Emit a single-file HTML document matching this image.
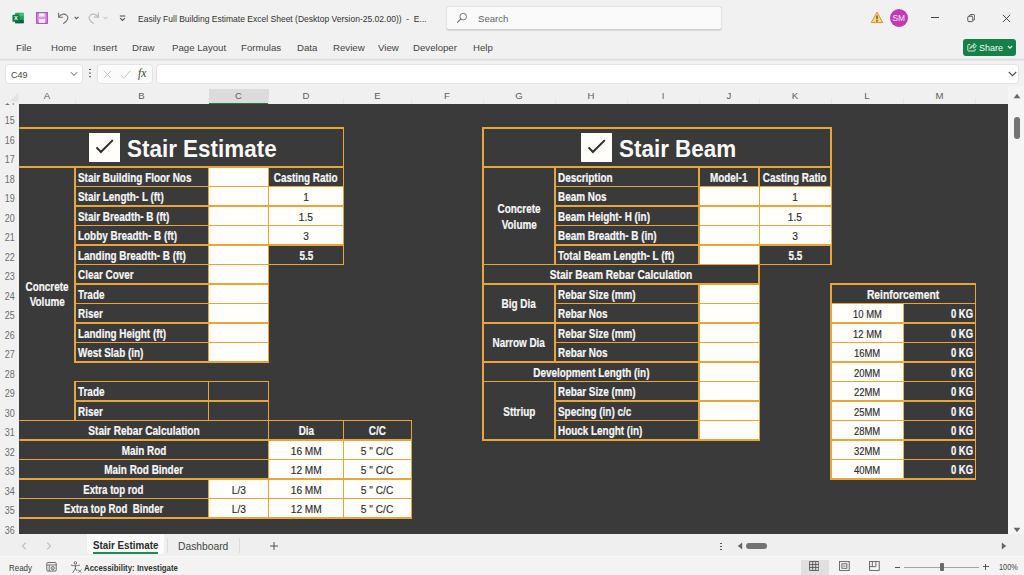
<!DOCTYPE html>
<html lang="en">
<head>
<meta charset="utf-8">
<title>Easily Full Building Estimate Excel Sheet</title>
<style>
html,body{margin:0;padding:0}
body{width:1024px;height:575px;overflow:hidden;background:#f1f1f1;font-family:"Liberation Sans",sans-serif;position:relative;color:#333}
#app{position:absolute;left:0;top:0;width:1024px;height:575px;overflow:hidden;background:#f1f1f1}
.abs{position:absolute}
.ui{position:absolute;white-space:nowrap;color:#3b3b3b;font-size:10.4px;line-height:14px;height:14px}
.ui span,.t span,.ttl span{display:inline-block;white-space:nowrap}
#sheet{position:absolute;left:19.300px;top:104px;width:988.700px;height:430.400px;background:#3a3a3a}
#grid{position:absolute;left:0;top:0;width:1024px;height:534px;overflow:hidden;clip-path:inset(104px 16px 0 19.400px)}
.ln{position:absolute}
.t{position:absolute;display:flex;height:20px;line-height:20px;white-space:nowrap;font-size:12px}
.t.b{font-weight:bold;color:#f7f7f7;-webkit-text-stroke:0.2px #f7f7f7}
.t.n{color:#2c2c2c;font-size:11.300px;-webkit-text-stroke:0.150px #2c2c2c}
.ttl{position:absolute;white-space:nowrap;font-weight:bold;font-size:23.700px;line-height:26px;color:#fafafa}
.ch{position:absolute;top:89.300px;width:40px;text-align:center;font-size:9.600px;line-height:14px;color:#5e5e5e}
.rh{position:absolute;left:0;width:19.500px;text-align:center;font-size:10.200px;line-height:16px;height:16px;color:#6c6c6c;transform:scaleX(0.88)}
</style>
</head>
<body>
<div id="app">

<!-- ===== title bar ===== -->
<div id="titlebar">
<!-- excel logo -->
<svg class="abs" style="left:12px;top:11.6px" width="12.2" height="12.2" viewBox="0 0 14 14">
<rect x="3.5" y="1" width="10" height="12" rx="1" fill="#21a366"/>
<rect x="8.5" y="1" width="5" height="4" fill="#33c481"/>
<rect x="8.5" y="5" width="5" height="4" fill="#21a366"/>
<rect x="3.5" y="5" width="5" height="4" fill="#107c41"/>
<rect x="3.5" y="9" width="10" height="4" rx="1" fill="#185c37"/>
<rect x="0.5" y="3.2" width="8" height="8" rx="1" fill="#107c41"/>
<text x="4.5" y="9.6" font-family="Liberation Sans, sans-serif" font-size="6.6" font-weight="bold" fill="#fff" text-anchor="middle">X</text>
</svg>
<!-- save -->
<svg class="abs" style="left:36px;top:12px" width="12" height="12" viewBox="0 0 12 12">
<rect x="0.700" y="0.700" width="10.600" height="10.600" fill="#dc94e4" stroke="#a84bb8" stroke-width="1.200"/>
<rect x="3" y="1.300" width="5.600" height="3.300" fill="#f7eaf9"/>
<rect x="3" y="7" width="6" height="3.800" fill="#f7eaf9"/>
</svg>
<!-- undo -->
<svg class="abs" style="left:57px;top:11px" width="13" height="14" viewBox="0 0 13 14">
<path d="M1.600 1.800v4.400h4.400" fill="none" stroke="#727272" stroke-width="1.050"/>
<path d="M1.800 6.100C3.600 3.200 7.200 2.200 9.600 4.100c2.400 2 1.600 5.600-3.400 8.600" fill="none" stroke="#727272" stroke-width="1.050"/>
</svg>
<svg class="abs" style="left:74px;top:15.800px" width="5" height="4" viewBox="0 0 5 4"><path d="M0.600 0.800l1.900 1.900L4.400 0.800" fill="none" stroke="#555" stroke-width="1.100"/></svg>
<!-- redo -->
<svg class="abs" style="left:87px;top:11px" width="13" height="14" viewBox="0 0 13 14">
<path d="M11.4 1.6v4.6H6.8" fill="none" stroke="#bdbdbd" stroke-width="1.2"/>
<path d="M11.2 6.1C9.4 3.2 5.8 2.2 3.4 4.1c-2.4 2-1.6 5.6 3.4 8.6" fill="none" stroke="#bdbdbd" stroke-width="1.2"/>
</svg>
<svg class="abs" style="left:103px;top:15.800px" width="5" height="4" viewBox="0 0 5 4"><path d="M0.600 0.800l1.900 1.900L4.400 0.800" fill="none" stroke="#cacaca" stroke-width="1.100"/></svg>
<!-- customize QAT -->
<svg class="abs" style="left:119px;top:14.600px" width="7" height="7" viewBox="0 0 7 7"><path d="M0.800 1h5.400" stroke="#555" stroke-width="1.100"/><path d="M1.200 3.200l2.300 2.300 2.300-2.300" fill="none" stroke="#555" stroke-width="1.200"/></svg>
<!-- title -->
<div class="ui" style="left:137.5px;top:11.700px;font-size:9.8px;color:#333"><span style="transform:scaleX(0.869);transform-origin:left center">Easily Full Building Estimate Excel Sheet (Desktop Version-25.02.00))&nbsp; -&nbsp; E...</span></div>
<!-- search -->
<div class="abs" style="left:446px;top:6px;width:276px;height:23.5px;box-sizing:border-box;background:#fafafa;border:1px solid #e3e3e3;border-bottom-color:#cfcfcf;border-radius:3.5px;box-shadow:0 0.6px 1px rgba(0,0,0,.10)"></div>
<svg class="abs" style="left:456px;top:12px" width="12" height="12" viewBox="0 0 12 12"><circle cx="7.2" cy="4.6" r="3.300" fill="none" stroke="#777" stroke-width="1"/><path d="M4.800 7L1.400 10.400" stroke="#777" stroke-width="1.100" stroke-linecap="round"/></svg>
<div class="ui" style="left:477.5px;top:11.5px;color:#666;font-size:9.8px"><span style="transform:scaleX(0.98);transform-origin:left center">Search</span></div>
<!-- warning -->
<svg class="abs" style="left:870px;top:11px" width="14" height="13" viewBox="0 0 14 13"><path d="M7 1.2L12.8 11.6H1.2z" fill="#fbd48a" stroke="#d9962b" stroke-width="1" stroke-linejoin="round"/><path d="M7 4.6v3.6" stroke="#5a4310" stroke-width="1.3"/><circle cx="7" cy="9.9" r="0.8" fill="#5a4310"/></svg>
<!-- avatar -->
<div class="abs" style="left:889.6px;top:8.6px;width:18.4px;height:18.4px;border-radius:50%;background:#c239b3"></div>
<div class="ui" style="left:889.6px;top:10.8px;width:18.4px;text-align:center;color:#fbe9f9;font-size:8.4px"><span>SM</span></div>
<!-- window controls -->
<div class="abs" style="left:931.200px;top:16.700px;width:7.600px;height:1px;background:#444"></div>
<svg class="abs" style="left:966.600px;top:14.400px" width="8.600" height="8.600" viewBox="0 0 10 10"><rect x="0.9" y="2.6" width="5.8" height="6.2" rx="1.3" fill="none" stroke="#333" stroke-width="1"/><path d="M3 2.4V2c0-.8.5-1.3 1.300-1.300h3.400c.8 0 1.300.5 1.300 1.300v3.700c0 .8-.5 1.300-1.300 1.300H7" fill="none" stroke="#333" stroke-width="1"/></svg>
<svg class="abs" style="left:1002.400px;top:13.600px" width="9" height="9" viewBox="0 0 10 10"><path d="M1 1l8 8M9 1l-8 8" stroke="#333" stroke-width="1"/></svg>

</div>

<!-- ===== ribbon tabs ===== -->
<div id="tabs">
<div class="ui" style="left:16.3px;top:40.600px;font-size:9.700px;color:#444"><span style="transform:scaleX(0.995);transform-origin:left center">File</span></div>
<div class="ui" style="left:51px;top:40.600px;font-size:9.700px;color:#444"><span style="transform:scaleX(0.995);transform-origin:left center">Home</span></div>
<div class="ui" style="left:93px;top:40.600px;font-size:9.700px;color:#444"><span style="transform:scaleX(0.995);transform-origin:left center">Insert</span></div>
<div class="ui" style="left:132.3px;top:40.600px;font-size:9.700px;color:#444"><span style="transform:scaleX(0.995);transform-origin:left center">Draw</span></div>
<div class="ui" style="left:171.5px;top:40.600px;font-size:9.700px;color:#444"><span style="transform:scaleX(0.995);transform-origin:left center">Page Layout</span></div>
<div class="ui" style="left:241.3px;top:40.600px;font-size:9.700px;color:#444"><span style="transform:scaleX(0.995);transform-origin:left center">Formulas</span></div>
<div class="ui" style="left:297.3px;top:40.600px;font-size:9.700px;color:#444"><span style="transform:scaleX(0.995);transform-origin:left center">Data</span></div>
<div class="ui" style="left:333.3px;top:40.600px;font-size:9.700px;color:#444"><span style="transform:scaleX(0.995);transform-origin:left center">Review</span></div>
<div class="ui" style="left:378px;top:40.600px;font-size:9.700px;color:#444"><span style="transform:scaleX(0.995);transform-origin:left center">View</span></div>
<div class="ui" style="left:413.3px;top:40.600px;font-size:9.700px;color:#444"><span style="transform:scaleX(0.995);transform-origin:left center">Developer</span></div>
<div class="ui" style="left:473.3px;top:40.600px;font-size:9.700px;color:#444"><span style="transform:scaleX(0.995);transform-origin:left center">Help</span></div>
<!-- share button -->
<div class="abs" style="left:962.5px;top:38.6px;width:53px;height:17.6px;border-radius:3px;background:#15804a"></div>
<svg class="abs" style="left:966.5px;top:42px" width="10" height="10" viewBox="0 0 10 10"><path d="M3.4 2.6H1.600c-.5 0-.8.300-.8.800v4.800c0 .5.300.8.800.8h5.800c.5 0 .8-.3.800-.8V7" fill="none" stroke="#e9f5ee" stroke-width="0.9"/><path d="M3 6.600c.4-2 1.800-3.200 4-3.300V1.400l2.400 2.500L7 6.400V4.700C5.400 4.700 4 5.300 3 6.600z" fill="none" stroke="#e9f5ee" stroke-width="0.9" stroke-linejoin="round"/></svg>
<div class="ui" style="left:978.600px;top:40.600px;color:#f4fbf6;font-size:9.800px"><span style="transform:scaleX(0.92);transform-origin:left center">Share</span></div>
<svg class="abs" style="left:1007px;top:45.4px" width="6" height="5" viewBox="0 0 6 5"><path d="M0.900 1l2.100 2.100L5.100 1" fill="none" stroke="#e9f5ee" stroke-width="1.1"/></svg>
<!-- separator shadow -->
<div class="abs" style="left:0;top:57.800px;width:1024px;height:3px;background:linear-gradient(#efefef,#dcdcdc 50%,#ededed)"></div>

</div>

<!-- ===== formula bar ===== -->
<div id="fbar">
<div class="abs" style="left:6.300px;top:65px;width:75.500px;height:17.800px;background:#fff;border-radius:3px;box-shadow:0 0 0 0.800px #e0e0e0"></div>
<div class="ui" style="left:11.300px;top:67.700px;font-size:9.800px;color:#444"><span style="transform:scaleX(0.92);transform-origin:left center">C49</span></div>
<svg class="abs" style="left:69.500px;top:71px" width="8" height="6" viewBox="0 0 8 6"><path d="M0.800 1.200l3.200 3.200 3.200-3.200" fill="none" stroke="#555" stroke-width="0.950"/></svg>
<div class="abs" style="left:89.4px;top:68.6px;width:1.5px;height:1.500px;background:#555;box-shadow:0 3.600px 0 #555,0 7.200px 0 #555"></div>
<div class="abs" style="left:98px;top:65px;width:54px;height:17.800px;background:#fbfbfb;border-radius:3px;box-shadow:0 0 0 0.800px #e0e0e0"></div>
<svg class="abs" style="left:103px;top:69.500px" width="9" height="9" viewBox="0 0 9 9"><path d="M0.800.8l7.400 7.400M8.200.8L.8 8.200" stroke="#c6c6c6" stroke-width="1"/></svg>
<svg class="abs" style="left:119.500px;top:69.500px" width="11" height="9" viewBox="0 0 11 9"><path d="M0.800 5l3.200 3.200L10.200.8" fill="none" stroke="#c6c6c6" stroke-width="1"/></svg>
<div class="ui" style="left:138px;top:66.2px;font-family:'Liberation Serif',serif;font-style:italic;font-size:11.5px;color:#444"><span><b style="font-weight:normal">f</b>x</span></div>
<div class="abs" style="left:156.800px;top:65px;width:861.400px;height:17.800px;background:#fff;border-radius:3px;box-shadow:0 0 0 0.800px #e0e0e0"></div>
<svg class="abs" style="left:1007.500px;top:70.5px" width="9" height="6" viewBox="0 0 9 6"><path d="M0.800 1l3.700 3.700L8.200 1" fill="none" stroke="#555" stroke-width="1.1"/></svg>

</div>

<!-- ===== column headers ===== -->
<div id="colhdr">
<div class="abs" style="left:0;top:86px;width:1024px;height:18px;background:#f0f0f0"></div>
<div class="abs" style="left:208.5px;top:88.500px;width:60px;height:15.500px;background:#dcdcdc;border-bottom:1.6px solid #1f7a48;box-sizing:border-box"></div>
<svg class="abs" style="left:7px;top:90px" width="12" height="12" viewBox="0 0 12 12"><path d="M11.500 2.500v9H2.500z" fill="#e3e3e3"/></svg>
<div class="ch" style="left:27px">A</div>
<div class="ch" style="left:121.5px">B</div>
<div class="ch" style="left:218.5px">C</div>
<div class="ch" style="left:286px">D</div>
<div class="ch" style="left:357.5px">E</div>
<div class="ch" style="left:427px">F</div>
<div class="ch" style="left:499px">G</div>
<div class="ch" style="left:571px">H</div>
<div class="ch" style="left:643px">I</div>
<div class="ch" style="left:709px">J</div>
<div class="ch" style="left:775px">K</div>
<div class="ch" style="left:847px">L</div>
<div class="ch" style="left:919.5px">M</div>
<div style="position:absolute;left:74.5px;top:98px;width:1px;height:6px;background:#e6e6e6"></div>
<div style="position:absolute;left:208.0px;top:98px;width:1px;height:6px;background:#e6e6e6"></div>
<div style="position:absolute;left:268.0px;top:98px;width:1px;height:6px;background:#e6e6e6"></div>
<div style="position:absolute;left:343.0px;top:98px;width:1px;height:6px;background:#e6e6e6"></div>
<div style="position:absolute;left:411.0px;top:98px;width:1px;height:6px;background:#e6e6e6"></div>
<div style="position:absolute;left:482.5px;top:98px;width:1px;height:6px;background:#e6e6e6"></div>
<div style="position:absolute;left:554.5px;top:98px;width:1px;height:6px;background:#e6e6e6"></div>
<div style="position:absolute;left:626.5px;top:98px;width:1px;height:6px;background:#e6e6e6"></div>
<div style="position:absolute;left:698.5px;top:98px;width:1px;height:6px;background:#e6e6e6"></div>
<div style="position:absolute;left:758.5px;top:98px;width:1px;height:6px;background:#e6e6e6"></div>
<div style="position:absolute;left:830.5px;top:98px;width:1px;height:6px;background:#e6e6e6"></div>
<div style="position:absolute;left:903.0px;top:98px;width:1px;height:6px;background:#e6e6e6"></div>
<div style="position:absolute;left:975.0px;top:98px;width:1px;height:6px;background:#e6e6e6"></div>
</div>

<!-- ===== row headers ===== -->
<div id="rowhdr" class="abs" style="left:0;top:103px;width:19px;height:431px;overflow:hidden;background:#f1f1f1">
<div class="abs" style="left:0;top:-103px;width:19px;height:575px">
<div class="rh" style="top:93.55px">14</div>
<div class="rh" style="top:113.05px">15</div>
<div class="rh" style="top:132.55px">16</div>
<div class="rh" style="top:152.05px">17</div>
<div class="rh" style="top:171.55px">18</div>
<div class="rh" style="top:191.05px">19</div>
<div class="rh" style="top:210.55px">20</div>
<div class="rh" style="top:230.05px">21</div>
<div class="rh" style="top:249.55px">22</div>
<div class="rh" style="top:269.05px">23</div>
<div class="rh" style="top:288.55px">24</div>
<div class="rh" style="top:308.05px">25</div>
<div class="rh" style="top:327.55px">26</div>
<div class="rh" style="top:347.05px">27</div>
<div class="rh" style="top:366.55px">28</div>
<div class="rh" style="top:386.05px">29</div>
<div class="rh" style="top:405.55px">30</div>
<div class="rh" style="top:425.05px">31</div>
<div class="rh" style="top:444.55px">32</div>
<div class="rh" style="top:464.05px">33</div>
<div class="rh" style="top:483.55px">34</div>
<div class="rh" style="top:503.05px">35</div>
<div class="rh" style="top:522.55px">36</div>
</div>
</div>

<!-- ===== sheet ===== -->
<div id="sheet"></div>
<div id="grid">
<div class="ln" style="left:18.15px;top:127.15px;width:326.20px;height:1.7px;background:#e8a63a"></div>
<div class="ln" style="left:18.15px;top:166.15px;width:326.20px;height:1.7px;background:#e8a63a"></div>
<div class="ln" style="left:342.65px;top:127.15px;width:1.7px;height:40.70px;background:#e8a63a"></div>
<div class="ln" style="left:18.15px;top:166.15px;width:326.20px;height:1.7px;background:#e8a63a"></div>
<div class="ln" style="left:74.15px;top:166.15px;width:135.20px;height:1.7px;background:#e8a63a"></div>
<div class="ln" style="left:74.15px;top:185.65px;width:135.20px;height:1.7px;background:#e8a63a"></div>
<div class="ln" style="left:74.15px;top:166.15px;width:1.7px;height:21.20px;background:#e8a63a"></div>
<div class="ln" style="left:207.65px;top:166.15px;width:1.7px;height:21.20px;background:#e8a63a"></div>
<div class="ln" style="left:207.65px;top:166.15px;width:61.70px;height:1.7px;background:#e8a63a"></div>
<div class="ln" style="left:207.65px;top:185.65px;width:61.70px;height:1.7px;background:#e8a63a"></div>
<div class="ln" style="left:207.65px;top:166.15px;width:1.7px;height:21.20px;background:#e8a63a"></div>
<div class="ln" style="left:267.65px;top:166.15px;width:1.7px;height:21.20px;background:#e8a63a"></div>
<div class="ln" style="left:74.15px;top:185.65px;width:135.20px;height:1.7px;background:#e8a63a"></div>
<div class="ln" style="left:74.15px;top:205.15px;width:135.20px;height:1.7px;background:#e8a63a"></div>
<div class="ln" style="left:74.15px;top:185.65px;width:1.7px;height:21.20px;background:#e8a63a"></div>
<div class="ln" style="left:207.65px;top:185.65px;width:1.7px;height:21.20px;background:#e8a63a"></div>
<div class="ln" style="left:207.65px;top:185.65px;width:61.70px;height:1.7px;background:#e8a63a"></div>
<div class="ln" style="left:207.65px;top:205.15px;width:61.70px;height:1.7px;background:#e8a63a"></div>
<div class="ln" style="left:207.65px;top:185.65px;width:1.7px;height:21.20px;background:#e8a63a"></div>
<div class="ln" style="left:267.65px;top:185.65px;width:1.7px;height:21.20px;background:#e8a63a"></div>
<div class="ln" style="left:74.15px;top:205.15px;width:135.20px;height:1.7px;background:#e8a63a"></div>
<div class="ln" style="left:74.15px;top:224.65px;width:135.20px;height:1.7px;background:#e8a63a"></div>
<div class="ln" style="left:74.15px;top:205.15px;width:1.7px;height:21.20px;background:#e8a63a"></div>
<div class="ln" style="left:207.65px;top:205.15px;width:1.7px;height:21.20px;background:#e8a63a"></div>
<div class="ln" style="left:207.65px;top:205.15px;width:61.70px;height:1.7px;background:#e8a63a"></div>
<div class="ln" style="left:207.65px;top:224.65px;width:61.70px;height:1.7px;background:#e8a63a"></div>
<div class="ln" style="left:207.65px;top:205.15px;width:1.7px;height:21.20px;background:#e8a63a"></div>
<div class="ln" style="left:267.65px;top:205.15px;width:1.7px;height:21.20px;background:#e8a63a"></div>
<div class="ln" style="left:74.15px;top:224.65px;width:135.20px;height:1.7px;background:#e8a63a"></div>
<div class="ln" style="left:74.15px;top:244.15px;width:135.20px;height:1.7px;background:#e8a63a"></div>
<div class="ln" style="left:74.15px;top:224.65px;width:1.7px;height:21.20px;background:#e8a63a"></div>
<div class="ln" style="left:207.65px;top:224.65px;width:1.7px;height:21.20px;background:#e8a63a"></div>
<div class="ln" style="left:207.65px;top:224.65px;width:61.70px;height:1.7px;background:#e8a63a"></div>
<div class="ln" style="left:207.65px;top:244.15px;width:61.70px;height:1.7px;background:#e8a63a"></div>
<div class="ln" style="left:207.65px;top:224.65px;width:1.7px;height:21.20px;background:#e8a63a"></div>
<div class="ln" style="left:267.65px;top:224.65px;width:1.7px;height:21.20px;background:#e8a63a"></div>
<div class="ln" style="left:74.15px;top:244.15px;width:135.20px;height:1.7px;background:#e8a63a"></div>
<div class="ln" style="left:74.15px;top:263.65px;width:135.20px;height:1.7px;background:#e8a63a"></div>
<div class="ln" style="left:74.15px;top:244.15px;width:1.7px;height:21.20px;background:#e8a63a"></div>
<div class="ln" style="left:207.65px;top:244.15px;width:1.7px;height:21.20px;background:#e8a63a"></div>
<div class="ln" style="left:207.65px;top:244.15px;width:61.70px;height:1.7px;background:#e8a63a"></div>
<div class="ln" style="left:207.65px;top:263.65px;width:61.70px;height:1.7px;background:#e8a63a"></div>
<div class="ln" style="left:207.65px;top:244.15px;width:1.7px;height:21.20px;background:#e8a63a"></div>
<div class="ln" style="left:267.65px;top:244.15px;width:1.7px;height:21.20px;background:#e8a63a"></div>
<div class="ln" style="left:74.15px;top:263.65px;width:135.20px;height:1.7px;background:#e8a63a"></div>
<div class="ln" style="left:74.15px;top:283.15px;width:135.20px;height:1.7px;background:#e8a63a"></div>
<div class="ln" style="left:74.15px;top:263.65px;width:1.7px;height:21.20px;background:#e8a63a"></div>
<div class="ln" style="left:207.65px;top:263.65px;width:1.7px;height:21.20px;background:#e8a63a"></div>
<div class="ln" style="left:207.65px;top:263.65px;width:61.70px;height:1.7px;background:#e8a63a"></div>
<div class="ln" style="left:207.65px;top:283.15px;width:61.70px;height:1.7px;background:#e8a63a"></div>
<div class="ln" style="left:207.65px;top:263.65px;width:1.7px;height:21.20px;background:#e8a63a"></div>
<div class="ln" style="left:267.65px;top:263.65px;width:1.7px;height:21.20px;background:#e8a63a"></div>
<div class="ln" style="left:74.15px;top:283.15px;width:135.20px;height:1.7px;background:#e8a63a"></div>
<div class="ln" style="left:74.15px;top:302.65px;width:135.20px;height:1.7px;background:#e8a63a"></div>
<div class="ln" style="left:74.15px;top:283.15px;width:1.7px;height:21.20px;background:#e8a63a"></div>
<div class="ln" style="left:207.65px;top:283.15px;width:1.7px;height:21.20px;background:#e8a63a"></div>
<div class="ln" style="left:207.65px;top:283.15px;width:61.70px;height:1.7px;background:#e8a63a"></div>
<div class="ln" style="left:207.65px;top:302.65px;width:61.70px;height:1.7px;background:#e8a63a"></div>
<div class="ln" style="left:207.65px;top:283.15px;width:1.7px;height:21.20px;background:#e8a63a"></div>
<div class="ln" style="left:267.65px;top:283.15px;width:1.7px;height:21.20px;background:#e8a63a"></div>
<div class="ln" style="left:74.15px;top:302.65px;width:135.20px;height:1.7px;background:#e8a63a"></div>
<div class="ln" style="left:74.15px;top:322.15px;width:135.20px;height:1.7px;background:#e8a63a"></div>
<div class="ln" style="left:74.15px;top:302.65px;width:1.7px;height:21.20px;background:#e8a63a"></div>
<div class="ln" style="left:207.65px;top:302.65px;width:1.7px;height:21.20px;background:#e8a63a"></div>
<div class="ln" style="left:207.65px;top:302.65px;width:61.70px;height:1.7px;background:#e8a63a"></div>
<div class="ln" style="left:207.65px;top:322.15px;width:61.70px;height:1.7px;background:#e8a63a"></div>
<div class="ln" style="left:207.65px;top:302.65px;width:1.7px;height:21.20px;background:#e8a63a"></div>
<div class="ln" style="left:267.65px;top:302.65px;width:1.7px;height:21.20px;background:#e8a63a"></div>
<div class="ln" style="left:74.15px;top:322.15px;width:135.20px;height:1.7px;background:#e8a63a"></div>
<div class="ln" style="left:74.15px;top:341.65px;width:135.20px;height:1.7px;background:#e8a63a"></div>
<div class="ln" style="left:74.15px;top:322.15px;width:1.7px;height:21.20px;background:#e8a63a"></div>
<div class="ln" style="left:207.65px;top:322.15px;width:1.7px;height:21.20px;background:#e8a63a"></div>
<div class="ln" style="left:207.65px;top:322.15px;width:61.70px;height:1.7px;background:#e8a63a"></div>
<div class="ln" style="left:207.65px;top:341.65px;width:61.70px;height:1.7px;background:#e8a63a"></div>
<div class="ln" style="left:207.65px;top:322.15px;width:1.7px;height:21.20px;background:#e8a63a"></div>
<div class="ln" style="left:267.65px;top:322.15px;width:1.7px;height:21.20px;background:#e8a63a"></div>
<div class="ln" style="left:74.15px;top:341.65px;width:135.20px;height:1.7px;background:#e8a63a"></div>
<div class="ln" style="left:74.15px;top:361.15px;width:135.20px;height:1.7px;background:#e8a63a"></div>
<div class="ln" style="left:74.15px;top:341.65px;width:1.7px;height:21.20px;background:#e8a63a"></div>
<div class="ln" style="left:207.65px;top:341.65px;width:1.7px;height:21.20px;background:#e8a63a"></div>
<div class="ln" style="left:207.65px;top:341.65px;width:61.70px;height:1.7px;background:#e8a63a"></div>
<div class="ln" style="left:207.65px;top:361.15px;width:61.70px;height:1.7px;background:#e8a63a"></div>
<div class="ln" style="left:207.65px;top:341.65px;width:1.7px;height:21.20px;background:#e8a63a"></div>
<div class="ln" style="left:267.65px;top:341.65px;width:1.7px;height:21.20px;background:#e8a63a"></div>
<div class="ln" style="left:267.65px;top:166.15px;width:76.70px;height:1.7px;background:#e8a63a"></div>
<div class="ln" style="left:267.65px;top:185.65px;width:76.70px;height:1.7px;background:#e8a63a"></div>
<div class="ln" style="left:267.65px;top:166.15px;width:1.7px;height:21.20px;background:#e8a63a"></div>
<div class="ln" style="left:342.65px;top:166.15px;width:1.7px;height:21.20px;background:#e8a63a"></div>
<div class="ln" style="left:267.65px;top:185.65px;width:76.70px;height:1.7px;background:#e8a63a"></div>
<div class="ln" style="left:267.65px;top:205.15px;width:76.70px;height:1.7px;background:#e8a63a"></div>
<div class="ln" style="left:267.65px;top:185.65px;width:1.7px;height:21.20px;background:#e8a63a"></div>
<div class="ln" style="left:342.65px;top:185.65px;width:1.7px;height:21.20px;background:#e8a63a"></div>
<div class="ln" style="left:267.65px;top:205.15px;width:76.70px;height:1.7px;background:#e8a63a"></div>
<div class="ln" style="left:267.65px;top:224.65px;width:76.70px;height:1.7px;background:#e8a63a"></div>
<div class="ln" style="left:267.65px;top:205.15px;width:1.7px;height:21.20px;background:#e8a63a"></div>
<div class="ln" style="left:342.65px;top:205.15px;width:1.7px;height:21.20px;background:#e8a63a"></div>
<div class="ln" style="left:267.65px;top:224.65px;width:76.70px;height:1.7px;background:#e8a63a"></div>
<div class="ln" style="left:267.65px;top:244.15px;width:76.70px;height:1.7px;background:#e8a63a"></div>
<div class="ln" style="left:267.65px;top:224.65px;width:1.7px;height:21.20px;background:#e8a63a"></div>
<div class="ln" style="left:342.65px;top:224.65px;width:1.7px;height:21.20px;background:#e8a63a"></div>
<div class="ln" style="left:267.65px;top:244.15px;width:76.70px;height:1.7px;background:#e8a63a"></div>
<div class="ln" style="left:267.65px;top:263.65px;width:76.70px;height:1.7px;background:#e8a63a"></div>
<div class="ln" style="left:267.65px;top:244.15px;width:1.7px;height:21.20px;background:#e8a63a"></div>
<div class="ln" style="left:342.65px;top:244.15px;width:1.7px;height:21.20px;background:#e8a63a"></div>
<div class="ln" style="left:74.15px;top:380.65px;width:135.20px;height:1.7px;background:#e8a63a"></div>
<div class="ln" style="left:74.15px;top:400.15px;width:135.20px;height:1.7px;background:#e8a63a"></div>
<div class="ln" style="left:74.15px;top:380.65px;width:1.7px;height:21.20px;background:#e8a63a"></div>
<div class="ln" style="left:207.65px;top:380.65px;width:1.7px;height:21.20px;background:#e8a63a"></div>
<div class="ln" style="left:207.65px;top:380.65px;width:61.70px;height:1.7px;background:#e8a63a"></div>
<div class="ln" style="left:207.65px;top:400.15px;width:61.70px;height:1.7px;background:#e8a63a"></div>
<div class="ln" style="left:207.65px;top:380.65px;width:1.7px;height:21.20px;background:#e8a63a"></div>
<div class="ln" style="left:267.65px;top:380.65px;width:1.7px;height:21.20px;background:#e8a63a"></div>
<div class="ln" style="left:74.15px;top:400.15px;width:135.20px;height:1.7px;background:#e8a63a"></div>
<div class="ln" style="left:74.15px;top:419.65px;width:135.20px;height:1.7px;background:#e8a63a"></div>
<div class="ln" style="left:74.15px;top:400.15px;width:1.7px;height:21.20px;background:#e8a63a"></div>
<div class="ln" style="left:207.65px;top:400.15px;width:1.7px;height:21.20px;background:#e8a63a"></div>
<div class="ln" style="left:207.65px;top:400.15px;width:61.70px;height:1.7px;background:#e8a63a"></div>
<div class="ln" style="left:207.65px;top:419.65px;width:61.70px;height:1.7px;background:#e8a63a"></div>
<div class="ln" style="left:207.65px;top:400.15px;width:1.7px;height:21.20px;background:#e8a63a"></div>
<div class="ln" style="left:267.65px;top:400.15px;width:1.7px;height:21.20px;background:#e8a63a"></div>
<div class="ln" style="left:18.15px;top:419.65px;width:394.20px;height:1.7px;background:#e8a63a"></div>
<div class="ln" style="left:267.65px;top:419.65px;width:76.70px;height:1.7px;background:#e8a63a"></div>
<div class="ln" style="left:267.65px;top:439.15px;width:76.70px;height:1.7px;background:#e8a63a"></div>
<div class="ln" style="left:267.65px;top:419.65px;width:1.7px;height:21.20px;background:#e8a63a"></div>
<div class="ln" style="left:342.65px;top:419.65px;width:1.7px;height:21.20px;background:#e8a63a"></div>
<div class="ln" style="left:342.65px;top:419.65px;width:69.70px;height:1.7px;background:#e8a63a"></div>
<div class="ln" style="left:342.65px;top:439.15px;width:69.70px;height:1.7px;background:#e8a63a"></div>
<div class="ln" style="left:342.65px;top:419.65px;width:1.7px;height:21.20px;background:#e8a63a"></div>
<div class="ln" style="left:410.65px;top:419.65px;width:1.7px;height:21.20px;background:#e8a63a"></div>
<div class="ln" style="left:267.65px;top:419.65px;width:1.7px;height:21.20px;background:#e8a63a"></div>
<div class="ln" style="left:18.15px;top:439.15px;width:394.20px;height:1.7px;background:#e8a63a"></div>
<div class="ln" style="left:267.65px;top:439.15px;width:76.70px;height:1.7px;background:#e8a63a"></div>
<div class="ln" style="left:267.65px;top:458.65px;width:76.70px;height:1.7px;background:#e8a63a"></div>
<div class="ln" style="left:267.65px;top:439.15px;width:1.7px;height:21.20px;background:#e8a63a"></div>
<div class="ln" style="left:342.65px;top:439.15px;width:1.7px;height:21.20px;background:#e8a63a"></div>
<div class="ln" style="left:342.65px;top:439.15px;width:69.70px;height:1.7px;background:#e8a63a"></div>
<div class="ln" style="left:342.65px;top:458.65px;width:69.70px;height:1.7px;background:#e8a63a"></div>
<div class="ln" style="left:342.65px;top:439.15px;width:1.7px;height:21.20px;background:#e8a63a"></div>
<div class="ln" style="left:410.65px;top:439.15px;width:1.7px;height:21.20px;background:#e8a63a"></div>
<div class="ln" style="left:267.65px;top:439.15px;width:1.7px;height:21.20px;background:#e8a63a"></div>
<div class="ln" style="left:18.15px;top:458.65px;width:394.20px;height:1.7px;background:#e8a63a"></div>
<div class="ln" style="left:267.65px;top:458.65px;width:76.70px;height:1.7px;background:#e8a63a"></div>
<div class="ln" style="left:267.65px;top:478.15px;width:76.70px;height:1.7px;background:#e8a63a"></div>
<div class="ln" style="left:267.65px;top:458.65px;width:1.7px;height:21.20px;background:#e8a63a"></div>
<div class="ln" style="left:342.65px;top:458.65px;width:1.7px;height:21.20px;background:#e8a63a"></div>
<div class="ln" style="left:342.65px;top:458.65px;width:69.70px;height:1.7px;background:#e8a63a"></div>
<div class="ln" style="left:342.65px;top:478.15px;width:69.70px;height:1.7px;background:#e8a63a"></div>
<div class="ln" style="left:342.65px;top:458.65px;width:1.7px;height:21.20px;background:#e8a63a"></div>
<div class="ln" style="left:410.65px;top:458.65px;width:1.7px;height:21.20px;background:#e8a63a"></div>
<div class="ln" style="left:267.65px;top:458.65px;width:1.7px;height:21.20px;background:#e8a63a"></div>
<div class="ln" style="left:18.15px;top:478.15px;width:394.20px;height:1.7px;background:#e8a63a"></div>
<div class="ln" style="left:207.65px;top:478.15px;width:61.70px;height:1.7px;background:#e8a63a"></div>
<div class="ln" style="left:207.65px;top:497.65px;width:61.70px;height:1.7px;background:#e8a63a"></div>
<div class="ln" style="left:207.65px;top:478.15px;width:1.7px;height:21.20px;background:#e8a63a"></div>
<div class="ln" style="left:267.65px;top:478.15px;width:1.7px;height:21.20px;background:#e8a63a"></div>
<div class="ln" style="left:267.65px;top:478.15px;width:76.70px;height:1.7px;background:#e8a63a"></div>
<div class="ln" style="left:267.65px;top:497.65px;width:76.70px;height:1.7px;background:#e8a63a"></div>
<div class="ln" style="left:267.65px;top:478.15px;width:1.7px;height:21.20px;background:#e8a63a"></div>
<div class="ln" style="left:342.65px;top:478.15px;width:1.7px;height:21.20px;background:#e8a63a"></div>
<div class="ln" style="left:342.65px;top:478.15px;width:69.70px;height:1.7px;background:#e8a63a"></div>
<div class="ln" style="left:342.65px;top:497.65px;width:69.70px;height:1.7px;background:#e8a63a"></div>
<div class="ln" style="left:342.65px;top:478.15px;width:1.7px;height:21.20px;background:#e8a63a"></div>
<div class="ln" style="left:410.65px;top:478.15px;width:1.7px;height:21.20px;background:#e8a63a"></div>
<div class="ln" style="left:18.15px;top:497.65px;width:394.20px;height:1.7px;background:#e8a63a"></div>
<div class="ln" style="left:207.65px;top:497.65px;width:61.70px;height:1.7px;background:#e8a63a"></div>
<div class="ln" style="left:207.65px;top:517.15px;width:61.70px;height:1.7px;background:#e8a63a"></div>
<div class="ln" style="left:207.65px;top:497.65px;width:1.7px;height:21.20px;background:#e8a63a"></div>
<div class="ln" style="left:267.65px;top:497.65px;width:1.7px;height:21.20px;background:#e8a63a"></div>
<div class="ln" style="left:267.65px;top:497.65px;width:76.70px;height:1.7px;background:#e8a63a"></div>
<div class="ln" style="left:267.65px;top:517.15px;width:76.70px;height:1.7px;background:#e8a63a"></div>
<div class="ln" style="left:267.65px;top:497.65px;width:1.7px;height:21.20px;background:#e8a63a"></div>
<div class="ln" style="left:342.65px;top:497.65px;width:1.7px;height:21.20px;background:#e8a63a"></div>
<div class="ln" style="left:342.65px;top:497.65px;width:69.70px;height:1.7px;background:#e8a63a"></div>
<div class="ln" style="left:342.65px;top:517.15px;width:69.70px;height:1.7px;background:#e8a63a"></div>
<div class="ln" style="left:342.65px;top:497.65px;width:1.7px;height:21.20px;background:#e8a63a"></div>
<div class="ln" style="left:410.65px;top:497.65px;width:1.7px;height:21.20px;background:#e8a63a"></div>
<div class="ln" style="left:18.15px;top:517.15px;width:394.20px;height:1.7px;background:#e8a63a"></div>
<div class="ln" style="left:18.15px;top:478.15px;width:394.20px;height:1.7px;background:#e8a63a"></div>
<div class="ln" style="left:482.15px;top:127.15px;width:349.70px;height:1.7px;background:#e8a63a"></div>
<div class="ln" style="left:482.15px;top:166.15px;width:349.70px;height:1.7px;background:#e8a63a"></div>
<div class="ln" style="left:482.15px;top:127.15px;width:1.7px;height:40.70px;background:#e8a63a"></div>
<div class="ln" style="left:830.15px;top:127.15px;width:1.7px;height:40.70px;background:#e8a63a"></div>
<div class="ln" style="left:482.15px;top:166.15px;width:73.70px;height:1.7px;background:#e8a63a"></div>
<div class="ln" style="left:482.15px;top:263.65px;width:73.70px;height:1.7px;background:#e8a63a"></div>
<div class="ln" style="left:482.15px;top:166.15px;width:1.7px;height:99.20px;background:#e8a63a"></div>
<div class="ln" style="left:554.15px;top:166.15px;width:1.7px;height:99.20px;background:#e8a63a"></div>
<div class="ln" style="left:554.15px;top:166.15px;width:145.70px;height:1.7px;background:#e8a63a"></div>
<div class="ln" style="left:554.15px;top:185.65px;width:145.70px;height:1.7px;background:#e8a63a"></div>
<div class="ln" style="left:554.15px;top:166.15px;width:1.7px;height:21.20px;background:#e8a63a"></div>
<div class="ln" style="left:698.15px;top:166.15px;width:1.7px;height:21.20px;background:#e8a63a"></div>
<div class="ln" style="left:698.15px;top:166.15px;width:61.70px;height:1.7px;background:#e8a63a"></div>
<div class="ln" style="left:698.15px;top:185.65px;width:61.70px;height:1.7px;background:#e8a63a"></div>
<div class="ln" style="left:698.15px;top:166.15px;width:1.7px;height:21.20px;background:#e8a63a"></div>
<div class="ln" style="left:758.15px;top:166.15px;width:1.7px;height:21.20px;background:#e8a63a"></div>
<div class="ln" style="left:758.15px;top:166.15px;width:73.70px;height:1.7px;background:#e8a63a"></div>
<div class="ln" style="left:758.15px;top:185.65px;width:73.70px;height:1.7px;background:#e8a63a"></div>
<div class="ln" style="left:758.15px;top:166.15px;width:1.7px;height:21.20px;background:#e8a63a"></div>
<div class="ln" style="left:830.15px;top:166.15px;width:1.7px;height:21.20px;background:#e8a63a"></div>
<div class="ln" style="left:554.15px;top:185.65px;width:145.70px;height:1.7px;background:#e8a63a"></div>
<div class="ln" style="left:554.15px;top:205.15px;width:145.70px;height:1.7px;background:#e8a63a"></div>
<div class="ln" style="left:554.15px;top:185.65px;width:1.7px;height:21.20px;background:#e8a63a"></div>
<div class="ln" style="left:698.15px;top:185.65px;width:1.7px;height:21.20px;background:#e8a63a"></div>
<div class="ln" style="left:698.15px;top:185.65px;width:61.70px;height:1.7px;background:#e8a63a"></div>
<div class="ln" style="left:698.15px;top:205.15px;width:61.70px;height:1.7px;background:#e8a63a"></div>
<div class="ln" style="left:698.15px;top:185.65px;width:1.7px;height:21.20px;background:#e8a63a"></div>
<div class="ln" style="left:758.15px;top:185.65px;width:1.7px;height:21.20px;background:#e8a63a"></div>
<div class="ln" style="left:758.15px;top:185.65px;width:73.70px;height:1.7px;background:#e8a63a"></div>
<div class="ln" style="left:758.15px;top:205.15px;width:73.70px;height:1.7px;background:#e8a63a"></div>
<div class="ln" style="left:758.15px;top:185.65px;width:1.7px;height:21.20px;background:#e8a63a"></div>
<div class="ln" style="left:830.15px;top:185.65px;width:1.7px;height:21.20px;background:#e8a63a"></div>
<div class="ln" style="left:554.15px;top:205.15px;width:145.70px;height:1.7px;background:#e8a63a"></div>
<div class="ln" style="left:554.15px;top:224.65px;width:145.70px;height:1.7px;background:#e8a63a"></div>
<div class="ln" style="left:554.15px;top:205.15px;width:1.7px;height:21.20px;background:#e8a63a"></div>
<div class="ln" style="left:698.15px;top:205.15px;width:1.7px;height:21.20px;background:#e8a63a"></div>
<div class="ln" style="left:698.15px;top:205.15px;width:61.70px;height:1.7px;background:#e8a63a"></div>
<div class="ln" style="left:698.15px;top:224.65px;width:61.70px;height:1.7px;background:#e8a63a"></div>
<div class="ln" style="left:698.15px;top:205.15px;width:1.7px;height:21.20px;background:#e8a63a"></div>
<div class="ln" style="left:758.15px;top:205.15px;width:1.7px;height:21.20px;background:#e8a63a"></div>
<div class="ln" style="left:758.15px;top:205.15px;width:73.70px;height:1.7px;background:#e8a63a"></div>
<div class="ln" style="left:758.15px;top:224.65px;width:73.70px;height:1.7px;background:#e8a63a"></div>
<div class="ln" style="left:758.15px;top:205.15px;width:1.7px;height:21.20px;background:#e8a63a"></div>
<div class="ln" style="left:830.15px;top:205.15px;width:1.7px;height:21.20px;background:#e8a63a"></div>
<div class="ln" style="left:554.15px;top:224.65px;width:145.70px;height:1.7px;background:#e8a63a"></div>
<div class="ln" style="left:554.15px;top:244.15px;width:145.70px;height:1.7px;background:#e8a63a"></div>
<div class="ln" style="left:554.15px;top:224.65px;width:1.7px;height:21.20px;background:#e8a63a"></div>
<div class="ln" style="left:698.15px;top:224.65px;width:1.7px;height:21.20px;background:#e8a63a"></div>
<div class="ln" style="left:698.15px;top:224.65px;width:61.70px;height:1.7px;background:#e8a63a"></div>
<div class="ln" style="left:698.15px;top:244.15px;width:61.70px;height:1.7px;background:#e8a63a"></div>
<div class="ln" style="left:698.15px;top:224.65px;width:1.7px;height:21.20px;background:#e8a63a"></div>
<div class="ln" style="left:758.15px;top:224.65px;width:1.7px;height:21.20px;background:#e8a63a"></div>
<div class="ln" style="left:758.15px;top:224.65px;width:73.70px;height:1.7px;background:#e8a63a"></div>
<div class="ln" style="left:758.15px;top:244.15px;width:73.70px;height:1.7px;background:#e8a63a"></div>
<div class="ln" style="left:758.15px;top:224.65px;width:1.7px;height:21.20px;background:#e8a63a"></div>
<div class="ln" style="left:830.15px;top:224.65px;width:1.7px;height:21.20px;background:#e8a63a"></div>
<div class="ln" style="left:554.15px;top:244.15px;width:145.70px;height:1.7px;background:#e8a63a"></div>
<div class="ln" style="left:554.15px;top:263.65px;width:145.70px;height:1.7px;background:#e8a63a"></div>
<div class="ln" style="left:554.15px;top:244.15px;width:1.7px;height:21.20px;background:#e8a63a"></div>
<div class="ln" style="left:698.15px;top:244.15px;width:1.7px;height:21.20px;background:#e8a63a"></div>
<div class="ln" style="left:698.15px;top:244.15px;width:61.70px;height:1.7px;background:#e8a63a"></div>
<div class="ln" style="left:698.15px;top:263.65px;width:61.70px;height:1.7px;background:#e8a63a"></div>
<div class="ln" style="left:698.15px;top:244.15px;width:1.7px;height:21.20px;background:#e8a63a"></div>
<div class="ln" style="left:758.15px;top:244.15px;width:1.7px;height:21.20px;background:#e8a63a"></div>
<div class="ln" style="left:758.15px;top:244.15px;width:73.70px;height:1.7px;background:#e8a63a"></div>
<div class="ln" style="left:758.15px;top:263.65px;width:73.70px;height:1.7px;background:#e8a63a"></div>
<div class="ln" style="left:758.15px;top:244.15px;width:1.7px;height:21.20px;background:#e8a63a"></div>
<div class="ln" style="left:830.15px;top:244.15px;width:1.7px;height:21.20px;background:#e8a63a"></div>
<div class="ln" style="left:482.15px;top:263.65px;width:277.70px;height:1.7px;background:#e8a63a"></div>
<div class="ln" style="left:482.15px;top:283.15px;width:277.70px;height:1.7px;background:#e8a63a"></div>
<div class="ln" style="left:482.15px;top:263.65px;width:1.7px;height:21.20px;background:#e8a63a"></div>
<div class="ln" style="left:758.15px;top:263.65px;width:1.7px;height:21.20px;background:#e8a63a"></div>
<div class="ln" style="left:482.15px;top:283.15px;width:73.70px;height:1.7px;background:#e8a63a"></div>
<div class="ln" style="left:482.15px;top:322.15px;width:73.70px;height:1.7px;background:#e8a63a"></div>
<div class="ln" style="left:482.15px;top:283.15px;width:1.7px;height:40.70px;background:#e8a63a"></div>
<div class="ln" style="left:554.15px;top:283.15px;width:1.7px;height:40.70px;background:#e8a63a"></div>
<div class="ln" style="left:482.15px;top:322.15px;width:73.70px;height:1.7px;background:#e8a63a"></div>
<div class="ln" style="left:482.15px;top:361.15px;width:73.70px;height:1.7px;background:#e8a63a"></div>
<div class="ln" style="left:482.15px;top:322.15px;width:1.7px;height:40.70px;background:#e8a63a"></div>
<div class="ln" style="left:554.15px;top:322.15px;width:1.7px;height:40.70px;background:#e8a63a"></div>
<div class="ln" style="left:554.15px;top:283.15px;width:145.70px;height:1.7px;background:#e8a63a"></div>
<div class="ln" style="left:554.15px;top:302.65px;width:145.70px;height:1.7px;background:#e8a63a"></div>
<div class="ln" style="left:554.15px;top:283.15px;width:1.7px;height:21.20px;background:#e8a63a"></div>
<div class="ln" style="left:698.15px;top:283.15px;width:1.7px;height:21.20px;background:#e8a63a"></div>
<div class="ln" style="left:698.15px;top:283.15px;width:61.70px;height:1.7px;background:#e8a63a"></div>
<div class="ln" style="left:698.15px;top:302.65px;width:61.70px;height:1.7px;background:#e8a63a"></div>
<div class="ln" style="left:698.15px;top:283.15px;width:1.7px;height:21.20px;background:#e8a63a"></div>
<div class="ln" style="left:758.15px;top:283.15px;width:1.7px;height:21.20px;background:#e8a63a"></div>
<div class="ln" style="left:554.15px;top:302.65px;width:145.70px;height:1.7px;background:#e8a63a"></div>
<div class="ln" style="left:554.15px;top:322.15px;width:145.70px;height:1.7px;background:#e8a63a"></div>
<div class="ln" style="left:554.15px;top:302.65px;width:1.7px;height:21.20px;background:#e8a63a"></div>
<div class="ln" style="left:698.15px;top:302.65px;width:1.7px;height:21.20px;background:#e8a63a"></div>
<div class="ln" style="left:698.15px;top:302.65px;width:61.70px;height:1.7px;background:#e8a63a"></div>
<div class="ln" style="left:698.15px;top:322.15px;width:61.70px;height:1.7px;background:#e8a63a"></div>
<div class="ln" style="left:698.15px;top:302.65px;width:1.7px;height:21.20px;background:#e8a63a"></div>
<div class="ln" style="left:758.15px;top:302.65px;width:1.7px;height:21.20px;background:#e8a63a"></div>
<div class="ln" style="left:554.15px;top:322.15px;width:145.70px;height:1.7px;background:#e8a63a"></div>
<div class="ln" style="left:554.15px;top:341.65px;width:145.70px;height:1.7px;background:#e8a63a"></div>
<div class="ln" style="left:554.15px;top:322.15px;width:1.7px;height:21.20px;background:#e8a63a"></div>
<div class="ln" style="left:698.15px;top:322.15px;width:1.7px;height:21.20px;background:#e8a63a"></div>
<div class="ln" style="left:698.15px;top:322.15px;width:61.70px;height:1.7px;background:#e8a63a"></div>
<div class="ln" style="left:698.15px;top:341.65px;width:61.70px;height:1.7px;background:#e8a63a"></div>
<div class="ln" style="left:698.15px;top:322.15px;width:1.7px;height:21.20px;background:#e8a63a"></div>
<div class="ln" style="left:758.15px;top:322.15px;width:1.7px;height:21.20px;background:#e8a63a"></div>
<div class="ln" style="left:554.15px;top:341.65px;width:145.70px;height:1.7px;background:#e8a63a"></div>
<div class="ln" style="left:554.15px;top:361.15px;width:145.70px;height:1.7px;background:#e8a63a"></div>
<div class="ln" style="left:554.15px;top:341.65px;width:1.7px;height:21.20px;background:#e8a63a"></div>
<div class="ln" style="left:698.15px;top:341.65px;width:1.7px;height:21.20px;background:#e8a63a"></div>
<div class="ln" style="left:698.15px;top:341.65px;width:61.70px;height:1.7px;background:#e8a63a"></div>
<div class="ln" style="left:698.15px;top:361.15px;width:61.70px;height:1.7px;background:#e8a63a"></div>
<div class="ln" style="left:698.15px;top:341.65px;width:1.7px;height:21.20px;background:#e8a63a"></div>
<div class="ln" style="left:758.15px;top:341.65px;width:1.7px;height:21.20px;background:#e8a63a"></div>
<div class="ln" style="left:482.15px;top:361.15px;width:217.70px;height:1.7px;background:#e8a63a"></div>
<div class="ln" style="left:482.15px;top:380.65px;width:217.70px;height:1.7px;background:#e8a63a"></div>
<div class="ln" style="left:482.15px;top:361.15px;width:1.7px;height:21.20px;background:#e8a63a"></div>
<div class="ln" style="left:698.15px;top:361.15px;width:1.7px;height:21.20px;background:#e8a63a"></div>
<div class="ln" style="left:698.15px;top:361.15px;width:61.70px;height:1.7px;background:#e8a63a"></div>
<div class="ln" style="left:698.15px;top:380.65px;width:61.70px;height:1.7px;background:#e8a63a"></div>
<div class="ln" style="left:698.15px;top:361.15px;width:1.7px;height:21.20px;background:#e8a63a"></div>
<div class="ln" style="left:758.15px;top:361.15px;width:1.7px;height:21.20px;background:#e8a63a"></div>
<div class="ln" style="left:482.15px;top:380.65px;width:73.70px;height:1.7px;background:#e8a63a"></div>
<div class="ln" style="left:482.15px;top:439.15px;width:73.70px;height:1.7px;background:#e8a63a"></div>
<div class="ln" style="left:482.15px;top:380.65px;width:1.7px;height:60.20px;background:#e8a63a"></div>
<div class="ln" style="left:554.15px;top:380.65px;width:1.7px;height:60.20px;background:#e8a63a"></div>
<div class="ln" style="left:554.15px;top:380.65px;width:145.70px;height:1.7px;background:#e8a63a"></div>
<div class="ln" style="left:554.15px;top:400.15px;width:145.70px;height:1.7px;background:#e8a63a"></div>
<div class="ln" style="left:554.15px;top:380.65px;width:1.7px;height:21.20px;background:#e8a63a"></div>
<div class="ln" style="left:698.15px;top:380.65px;width:1.7px;height:21.20px;background:#e8a63a"></div>
<div class="ln" style="left:698.15px;top:380.65px;width:61.70px;height:1.7px;background:#e8a63a"></div>
<div class="ln" style="left:698.15px;top:400.15px;width:61.70px;height:1.7px;background:#e8a63a"></div>
<div class="ln" style="left:698.15px;top:380.65px;width:1.7px;height:21.20px;background:#e8a63a"></div>
<div class="ln" style="left:758.15px;top:380.65px;width:1.7px;height:21.20px;background:#e8a63a"></div>
<div class="ln" style="left:554.15px;top:400.15px;width:145.70px;height:1.7px;background:#e8a63a"></div>
<div class="ln" style="left:554.15px;top:419.65px;width:145.70px;height:1.7px;background:#e8a63a"></div>
<div class="ln" style="left:554.15px;top:400.15px;width:1.7px;height:21.20px;background:#e8a63a"></div>
<div class="ln" style="left:698.15px;top:400.15px;width:1.7px;height:21.20px;background:#e8a63a"></div>
<div class="ln" style="left:698.15px;top:400.15px;width:61.70px;height:1.7px;background:#e8a63a"></div>
<div class="ln" style="left:698.15px;top:419.65px;width:61.70px;height:1.7px;background:#e8a63a"></div>
<div class="ln" style="left:698.15px;top:400.15px;width:1.7px;height:21.20px;background:#e8a63a"></div>
<div class="ln" style="left:758.15px;top:400.15px;width:1.7px;height:21.20px;background:#e8a63a"></div>
<div class="ln" style="left:554.15px;top:419.65px;width:145.70px;height:1.7px;background:#e8a63a"></div>
<div class="ln" style="left:554.15px;top:439.15px;width:145.70px;height:1.7px;background:#e8a63a"></div>
<div class="ln" style="left:554.15px;top:419.65px;width:1.7px;height:21.20px;background:#e8a63a"></div>
<div class="ln" style="left:698.15px;top:419.65px;width:1.7px;height:21.20px;background:#e8a63a"></div>
<div class="ln" style="left:698.15px;top:419.65px;width:61.70px;height:1.7px;background:#e8a63a"></div>
<div class="ln" style="left:698.15px;top:439.15px;width:61.70px;height:1.7px;background:#e8a63a"></div>
<div class="ln" style="left:698.15px;top:419.65px;width:1.7px;height:21.20px;background:#e8a63a"></div>
<div class="ln" style="left:758.15px;top:419.65px;width:1.7px;height:21.20px;background:#e8a63a"></div>
<div class="ln" style="left:830.15px;top:283.15px;width:146.20px;height:1.7px;background:#e8a63a"></div>
<div class="ln" style="left:830.15px;top:302.65px;width:146.20px;height:1.7px;background:#e8a63a"></div>
<div class="ln" style="left:830.15px;top:283.15px;width:1.7px;height:21.20px;background:#e8a63a"></div>
<div class="ln" style="left:974.65px;top:283.15px;width:1.7px;height:21.20px;background:#e8a63a"></div>
<div class="ln" style="left:830.15px;top:302.65px;width:146.20px;height:1.7px;background:#e8a63a"></div>
<div class="ln" style="left:830.15px;top:322.15px;width:146.20px;height:1.7px;background:#e8a63a"></div>
<div class="ln" style="left:830.15px;top:341.65px;width:146.20px;height:1.7px;background:#e8a63a"></div>
<div class="ln" style="left:830.15px;top:361.15px;width:146.20px;height:1.7px;background:#e8a63a"></div>
<div class="ln" style="left:830.15px;top:380.65px;width:146.20px;height:1.7px;background:#e8a63a"></div>
<div class="ln" style="left:830.15px;top:400.15px;width:146.20px;height:1.7px;background:#e8a63a"></div>
<div class="ln" style="left:830.15px;top:419.65px;width:146.20px;height:1.7px;background:#e8a63a"></div>
<div class="ln" style="left:830.15px;top:439.15px;width:146.20px;height:1.7px;background:#e8a63a"></div>
<div class="ln" style="left:830.15px;top:458.65px;width:146.20px;height:1.7px;background:#e8a63a"></div>
<div class="ln" style="left:830.15px;top:478.15px;width:146.20px;height:1.7px;background:#e8a63a"></div>
<div class="ln" style="left:830.15px;top:302.65px;width:1.7px;height:177.20px;background:#e8a63a"></div>
<div class="ln" style="left:974.65px;top:302.65px;width:1.7px;height:177.20px;background:#e8a63a"></div>
<div class="ln" style="left:902.80px;top:302.65px;width:0.8px;height:177.20px;background:#dcb860"></div>
<div style="position:absolute;left:209.00px;top:167.60px;width:59.00px;height:18.30px;background:#fffefb;"></div>
<div style="position:absolute;left:209.00px;top:187.10px;width:59.00px;height:18.30px;background:#fffefb;"></div>
<div style="position:absolute;left:209.00px;top:206.60px;width:59.00px;height:18.30px;background:#fffefb;"></div>
<div style="position:absolute;left:209.00px;top:226.10px;width:59.00px;height:18.30px;background:#fffefb;"></div>
<div style="position:absolute;left:209.00px;top:245.60px;width:59.00px;height:18.30px;background:#fffefb;"></div>
<div style="position:absolute;left:209.00px;top:265.10px;width:59.00px;height:18.30px;background:#fffefb;"></div>
<div style="position:absolute;left:209.00px;top:284.60px;width:59.00px;height:18.30px;background:#fffefb;"></div>
<div style="position:absolute;left:209.00px;top:304.10px;width:59.00px;height:18.30px;background:#fffefb;"></div>
<div style="position:absolute;left:209.00px;top:323.60px;width:59.00px;height:18.30px;background:#fffefb;"></div>
<div style="position:absolute;left:209.00px;top:343.10px;width:59.00px;height:18.30px;background:#fffefb;"></div>
<div style="position:absolute;left:269.00px;top:187.10px;width:74.00px;height:18.30px;background:#fffefb;"></div>
<div style="position:absolute;left:269.00px;top:206.60px;width:74.00px;height:18.30px;background:#fffefb;"></div>
<div style="position:absolute;left:269.00px;top:226.10px;width:74.00px;height:18.30px;background:#fffefb;"></div>
<div style="position:absolute;left:269.00px;top:440.60px;width:74.00px;height:18.30px;background:#fffefb;"></div>
<div style="position:absolute;left:344.00px;top:440.60px;width:67.00px;height:18.30px;background:#fffefb;"></div>
<div style="position:absolute;left:269.00px;top:460.10px;width:74.00px;height:18.30px;background:#fffefb;"></div>
<div style="position:absolute;left:344.00px;top:460.10px;width:67.00px;height:18.30px;background:#fffefb;"></div>
<div style="position:absolute;left:269.00px;top:479.60px;width:74.00px;height:18.30px;background:#fffefb;"></div>
<div style="position:absolute;left:344.00px;top:479.60px;width:67.00px;height:18.30px;background:#fffefb;"></div>
<div style="position:absolute;left:269.00px;top:499.10px;width:74.00px;height:18.30px;background:#fffefb;"></div>
<div style="position:absolute;left:344.00px;top:499.10px;width:67.00px;height:18.30px;background:#fffefb;"></div>
<div style="position:absolute;left:209.00px;top:479.60px;width:59.00px;height:18.30px;background:#fffefb;"></div>
<div style="position:absolute;left:209.00px;top:499.10px;width:59.00px;height:18.30px;background:#fffefb;"></div>
<div style="position:absolute;left:699.50px;top:187.10px;width:59.00px;height:18.30px;background:#fffefb;"></div>
<div style="position:absolute;left:699.50px;top:206.60px;width:59.00px;height:18.30px;background:#fffefb;"></div>
<div style="position:absolute;left:699.50px;top:226.10px;width:59.00px;height:18.30px;background:#fffefb;"></div>
<div style="position:absolute;left:699.50px;top:245.60px;width:59.00px;height:18.30px;background:#fffefb;"></div>
<div style="position:absolute;left:699.50px;top:284.60px;width:59.00px;height:18.30px;background:#fffefb;"></div>
<div style="position:absolute;left:699.50px;top:304.10px;width:59.00px;height:18.30px;background:#fffefb;"></div>
<div style="position:absolute;left:699.50px;top:323.60px;width:59.00px;height:18.30px;background:#fffefb;"></div>
<div style="position:absolute;left:699.50px;top:343.10px;width:59.00px;height:18.30px;background:#fffefb;"></div>
<div style="position:absolute;left:699.50px;top:362.60px;width:59.00px;height:18.30px;background:#fffefb;"></div>
<div style="position:absolute;left:699.50px;top:382.10px;width:59.00px;height:18.30px;background:#fffefb;"></div>
<div style="position:absolute;left:699.50px;top:401.60px;width:59.00px;height:18.30px;background:#fffefb;"></div>
<div style="position:absolute;left:699.50px;top:421.10px;width:59.00px;height:18.30px;background:#fffefb;"></div>
<div style="position:absolute;left:759.50px;top:187.10px;width:71.00px;height:18.30px;background:#fffefb;"></div>
<div style="position:absolute;left:759.50px;top:206.60px;width:71.00px;height:18.30px;background:#fffefb;"></div>
<div style="position:absolute;left:759.50px;top:226.10px;width:71.00px;height:18.30px;background:#fffefb;"></div>
<div style="position:absolute;left:831.50px;top:304.10px;width:71.50px;height:18.30px;background:#fffefb;"></div>
<div style="position:absolute;left:831.50px;top:323.60px;width:71.50px;height:18.30px;background:#fffefb;"></div>
<div style="position:absolute;left:831.50px;top:343.10px;width:71.50px;height:18.30px;background:#fffefb;"></div>
<div style="position:absolute;left:831.50px;top:362.60px;width:71.50px;height:18.30px;background:#fffefb;"></div>
<div style="position:absolute;left:831.50px;top:382.10px;width:71.50px;height:18.30px;background:#fffefb;"></div>
<div style="position:absolute;left:831.50px;top:401.60px;width:71.50px;height:18.30px;background:#fffefb;"></div>
<div style="position:absolute;left:831.50px;top:421.10px;width:71.50px;height:18.30px;background:#fffefb;"></div>
<div style="position:absolute;left:831.50px;top:440.60px;width:71.50px;height:18.30px;background:#fffefb;"></div>
<div style="position:absolute;left:831.50px;top:460.10px;width:71.50px;height:18.30px;background:#fffefb;"></div>
<div style="position:absolute;left:88.6px;top:133px;width:31px;height:29px;background:#fffefb"><svg width="31" height="29" viewBox="0 0 31 29" style="position:absolute;left:0;top:0"><path d="M7.5 14.4 L11.9 19.0 L23.8 7.1" fill="none" stroke="#2e2e2e" stroke-width="2"/></svg></div>
<div class="ttl" style="left:127.3px;top:135.80px"><span style="transform:scaleX(0.947);transform-origin:left center">Stair Estimate</span></div>
<div style="position:absolute;left:581.0px;top:133px;width:31px;height:29px;background:#fffefb"><svg width="31" height="29" viewBox="0 0 31 29" style="position:absolute;left:0;top:0"><path d="M7.5 14.4 L11.9 19.0 L23.8 7.1" fill="none" stroke="#2e2e2e" stroke-width="2"/></svg></div>
<div class="ttl" style="left:619.3px;top:135.80px"><span style="transform:scaleX(0.947);transform-origin:left center">Stair Beam</span></div>
<div class="t b" style="left:77.60px;width:133.50px;justify-content:flex-start;top:167.55px;"><span style="transform:scaleX(0.826);transform-origin:left center">Stair Building Floor Nos</span></div>
<div class="t b" style="left:77.60px;width:133.50px;justify-content:flex-start;top:187.05px;"><span style="transform:scaleX(0.826);transform-origin:left center">Stair Length- L (ft)</span></div>
<div class="t b" style="left:77.60px;width:133.50px;justify-content:flex-start;top:206.55px;"><span style="transform:scaleX(0.826);transform-origin:left center">Stair Breadth- B (ft)</span></div>
<div class="t b" style="left:77.60px;width:133.50px;justify-content:flex-start;top:226.05px;"><span style="transform:scaleX(0.826);transform-origin:left center">Lobby Breadth- B (ft)</span></div>
<div class="t b" style="left:77.60px;width:133.50px;justify-content:flex-start;top:245.55px;"><span style="transform:scaleX(0.826);transform-origin:left center">Landing Breadth- B (ft)</span></div>
<div class="t b" style="left:77.60px;width:133.50px;justify-content:flex-start;top:265.05px;"><span style="transform:scaleX(0.826);transform-origin:left center">Clear Cover</span></div>
<div class="t b" style="left:77.60px;width:133.50px;justify-content:flex-start;top:284.55px;"><span style="transform:scaleX(0.826);transform-origin:left center">Trade</span></div>
<div class="t b" style="left:77.60px;width:133.50px;justify-content:flex-start;top:304.05px;"><span style="transform:scaleX(0.826);transform-origin:left center">Riser</span></div>
<div class="t b" style="left:77.60px;width:133.50px;justify-content:flex-start;top:323.55px;"><span style="transform:scaleX(0.826);transform-origin:left center">Landing Height (ft)</span></div>
<div class="t b" style="left:77.60px;width:133.50px;justify-content:flex-start;top:343.05px;"><span style="transform:scaleX(0.826);transform-origin:left center">West Slab (in)</span></div>
<div class="t b" style="left:77.60px;width:133.50px;justify-content:flex-start;top:382.05px;"><span style="transform:scaleX(0.826);transform-origin:left center">Trade</span></div>
<div class="t b" style="left:77.60px;width:133.50px;justify-content:flex-start;top:401.55px;"><span style="transform:scaleX(0.826);transform-origin:left center">Riser</span></div>
<div class="t b" style="left:268.50px;width:75.00px;justify-content:center;top:167.55px;"><span style="transform:scaleX(0.826);transform-origin:center center">Casting Ratio</span></div>
<div class="t n" style="left:268.50px;width:75.00px;justify-content:center;top:187.05px;"><span style="transform:scaleX(0.9);transform-origin:center center">1</span></div>
<div class="t n" style="left:268.50px;width:75.00px;justify-content:center;top:206.55px;"><span style="transform:scaleX(0.9);transform-origin:center center">1.5</span></div>
<div class="t n" style="left:268.50px;width:75.00px;justify-content:center;top:226.05px;"><span style="transform:scaleX(0.9);transform-origin:center center">3</span></div>
<div class="t b" style="left:268.50px;width:75.00px;justify-content:center;top:245.55px;"><span style="transform:scaleX(0.826);transform-origin:center center">5.5</span></div>
<div class="t b" style="left:19.00px;width:56.00px;justify-content:center;top:276.70px;"><span style="transform:scaleX(0.826);transform-origin:center center">Concrete</span></div>
<div class="t b" style="left:19.00px;width:56.00px;justify-content:center;top:292.30px;"><span style="transform:scaleX(0.826);transform-origin:center center">Volume</span></div>
<div class="t b" style="left:19.00px;width:249.50px;justify-content:center;top:421.05px;"><span style="transform:scaleX(0.844);transform-origin:center center">Stair Rebar Calculation</span></div>
<div class="t b" style="left:19.00px;width:249.50px;justify-content:center;top:440.55px;"><span style="transform:scaleX(0.826);transform-origin:center center">Main Rod</span></div>
<div class="t b" style="left:19.00px;width:249.50px;justify-content:center;top:460.05px;"><span style="transform:scaleX(0.826);transform-origin:center center">Main Rod Binder</span></div>
<div class="t b" style="left:19.00px;width:189.50px;justify-content:center;top:479.55px;"><span style="transform:scaleX(0.805);transform-origin:center center">Extra top rod</span></div>
<div class="t b" style="left:19.00px;width:189.50px;justify-content:center;top:499.05px;"><span style="transform:scaleX(0.805);transform-origin:center center">Extra top Rod&nbsp; Binder</span></div>
<div class="t b" style="left:268.50px;width:75.00px;justify-content:center;top:421.05px;"><span style="transform:scaleX(0.826);transform-origin:center center">Dia</span></div>
<div class="t b" style="left:343.50px;width:68.00px;justify-content:center;top:421.05px;"><span style="transform:scaleX(0.826);transform-origin:center center">C/C</span></div>
<div class="t n" style="left:268.50px;width:75.00px;justify-content:center;top:440.55px;"><span style="transform:scaleX(0.9);transform-origin:center center">16 MM</span></div>
<div class="t n" style="left:343.50px;width:68.00px;justify-content:center;top:440.55px;"><span style="transform:scaleX(0.9);transform-origin:center center">5 " C/C</span></div>
<div class="t n" style="left:268.50px;width:75.00px;justify-content:center;top:460.05px;"><span style="transform:scaleX(0.9);transform-origin:center center">12 MM</span></div>
<div class="t n" style="left:343.50px;width:68.00px;justify-content:center;top:460.05px;"><span style="transform:scaleX(0.9);transform-origin:center center">5 " C/C</span></div>
<div class="t n" style="left:268.50px;width:75.00px;justify-content:center;top:479.55px;"><span style="transform:scaleX(0.9);transform-origin:center center">16 MM</span></div>
<div class="t n" style="left:343.50px;width:68.00px;justify-content:center;top:479.55px;"><span style="transform:scaleX(0.9);transform-origin:center center">5 " C/C</span></div>
<div class="t n" style="left:268.50px;width:75.00px;justify-content:center;top:499.05px;"><span style="transform:scaleX(0.9);transform-origin:center center">12 MM</span></div>
<div class="t n" style="left:343.50px;width:68.00px;justify-content:center;top:499.05px;"><span style="transform:scaleX(0.9);transform-origin:center center">5 " C/C</span></div>
<div class="t n" style="left:208.50px;width:60.00px;justify-content:center;top:479.55px;"><span style="transform:scaleX(0.9);transform-origin:center center">L/3</span></div>
<div class="t n" style="left:208.50px;width:60.00px;justify-content:center;top:499.05px;"><span style="transform:scaleX(0.9);transform-origin:center center">L/3</span></div>
<div class="t b" style="left:557.60px;width:144.00px;justify-content:flex-start;top:167.55px;"><span style="transform:scaleX(0.826);transform-origin:left center">Description</span></div>
<div class="t b" style="left:557.60px;width:144.00px;justify-content:flex-start;top:187.05px;"><span style="transform:scaleX(0.826);transform-origin:left center">Beam Nos</span></div>
<div class="t b" style="left:557.60px;width:144.00px;justify-content:flex-start;top:206.55px;"><span style="transform:scaleX(0.826);transform-origin:left center">Beam Height- H (in)</span></div>
<div class="t b" style="left:557.60px;width:144.00px;justify-content:flex-start;top:226.05px;"><span style="transform:scaleX(0.826);transform-origin:left center">Beam Breadth- B (in)</span></div>
<div class="t b" style="left:557.60px;width:144.00px;justify-content:flex-start;top:245.55px;"><span style="transform:scaleX(0.826);transform-origin:left center">Total Beam Length- L (ft)</span></div>
<div class="t b" style="left:557.60px;width:144.00px;justify-content:flex-start;top:284.55px;"><span style="transform:scaleX(0.826);transform-origin:left center">Rebar Size (mm)</span></div>
<div class="t b" style="left:557.60px;width:144.00px;justify-content:flex-start;top:304.05px;"><span style="transform:scaleX(0.826);transform-origin:left center">Rebar Nos</span></div>
<div class="t b" style="left:557.60px;width:144.00px;justify-content:flex-start;top:323.55px;"><span style="transform:scaleX(0.826);transform-origin:left center">Rebar Size (mm)</span></div>
<div class="t b" style="left:557.60px;width:144.00px;justify-content:flex-start;top:343.05px;"><span style="transform:scaleX(0.826);transform-origin:left center">Rebar Nos</span></div>
<div class="t b" style="left:557.60px;width:144.00px;justify-content:flex-start;top:382.05px;"><span style="transform:scaleX(0.826);transform-origin:left center">Rebar Size (mm)</span></div>
<div class="t b" style="left:557.60px;width:144.00px;justify-content:flex-start;top:401.55px;"><span style="transform:scaleX(0.826);transform-origin:left center">Specing (in) c/c</span></div>
<div class="t b" style="left:557.60px;width:144.00px;justify-content:flex-start;top:421.05px;"><span style="transform:scaleX(0.826);transform-origin:left center">Houck Lenght (in)</span></div>
<div class="t b" style="left:699.00px;width:60.00px;justify-content:center;top:167.55px;"><span style="transform:scaleX(0.826);transform-origin:center center">Model-1</span></div>
<div class="t b" style="left:759.00px;width:72.00px;justify-content:center;top:167.55px;"><span style="transform:scaleX(0.826);transform-origin:center center">Casting Ratio</span></div>
<div class="t n" style="left:759.00px;width:72.00px;justify-content:center;top:187.05px;"><span style="transform:scaleX(0.9);transform-origin:center center">1</span></div>
<div class="t n" style="left:759.00px;width:72.00px;justify-content:center;top:206.55px;"><span style="transform:scaleX(0.9);transform-origin:center center">1.5</span></div>
<div class="t n" style="left:759.00px;width:72.00px;justify-content:center;top:226.05px;"><span style="transform:scaleX(0.9);transform-origin:center center">3</span></div>
<div class="t b" style="left:759.00px;width:72.00px;justify-content:center;top:245.55px;"><span style="transform:scaleX(0.826);transform-origin:center center">5.5</span></div>
<div class="t b" style="left:483.00px;width:72.00px;justify-content:center;top:198.95px;"><span style="transform:scaleX(0.826);transform-origin:center center">Concrete</span></div>
<div class="t b" style="left:483.00px;width:72.00px;justify-content:center;top:214.55px;"><span style="transform:scaleX(0.826);transform-origin:center center">Volume</span></div>
<div class="t b" style="left:483.00px;width:276.00px;justify-content:center;top:265.05px;"><span style="transform:scaleX(0.848);transform-origin:center center">Stair Beam Rebar Calculation</span></div>
<div class="t b" style="left:483.00px;width:72.00px;justify-content:center;top:294.30px;"><span style="transform:scaleX(0.826);transform-origin:center center">Big Dia</span></div>
<div class="t b" style="left:483.00px;width:72.00px;justify-content:center;top:333.30px;"><span style="transform:scaleX(0.826);transform-origin:center center">Narrow Dia</span></div>
<div class="t b" style="left:483.00px;width:216.00px;justify-content:center;top:362.55px;"><span style="transform:scaleX(0.826);transform-origin:center center">Development Length (in)</span></div>
<div class="t b" style="left:483.00px;width:72.00px;justify-content:center;top:401.55px;"><span style="transform:scaleX(0.826);transform-origin:center center">Sttriup</span></div>
<div class="t b" style="left:831.00px;width:144.50px;justify-content:center;top:284.55px;"><span style="transform:scaleX(0.86);transform-origin:center center">Reinforcement</span></div>
<div class="t n" style="left:831.00px;width:72.50px;justify-content:center;top:304.05px;font-size:10.8px;"><span style="transform:scaleX(0.875);transform-origin:center center">10 MM</span></div>
<div class="t b" style="left:903.50px;width:69.80px;justify-content:flex-end;top:304.05px;"><span style="transform:scaleX(0.79);transform-origin:right center">0 KG</span></div>
<div class="t n" style="left:831.00px;width:72.50px;justify-content:center;top:323.55px;font-size:10.8px;"><span style="transform:scaleX(0.875);transform-origin:center center">12 MM</span></div>
<div class="t b" style="left:903.50px;width:69.80px;justify-content:flex-end;top:323.55px;"><span style="transform:scaleX(0.79);transform-origin:right center">0 KG</span></div>
<div class="t n" style="left:831.00px;width:72.50px;justify-content:center;top:343.05px;font-size:10.8px;"><span style="transform:scaleX(0.875);transform-origin:center center">16MM</span></div>
<div class="t b" style="left:903.50px;width:69.80px;justify-content:flex-end;top:343.05px;"><span style="transform:scaleX(0.79);transform-origin:right center">0 KG</span></div>
<div class="t n" style="left:831.00px;width:72.50px;justify-content:center;top:362.55px;font-size:10.8px;"><span style="transform:scaleX(0.875);transform-origin:center center">20MM</span></div>
<div class="t b" style="left:903.50px;width:69.80px;justify-content:flex-end;top:362.55px;"><span style="transform:scaleX(0.79);transform-origin:right center">0 KG</span></div>
<div class="t n" style="left:831.00px;width:72.50px;justify-content:center;top:382.05px;font-size:10.8px;"><span style="transform:scaleX(0.875);transform-origin:center center">22MM</span></div>
<div class="t b" style="left:903.50px;width:69.80px;justify-content:flex-end;top:382.05px;"><span style="transform:scaleX(0.79);transform-origin:right center">0 KG</span></div>
<div class="t n" style="left:831.00px;width:72.50px;justify-content:center;top:401.55px;font-size:10.8px;"><span style="transform:scaleX(0.875);transform-origin:center center">25MM</span></div>
<div class="t b" style="left:903.50px;width:69.80px;justify-content:flex-end;top:401.55px;"><span style="transform:scaleX(0.79);transform-origin:right center">0 KG</span></div>
<div class="t n" style="left:831.00px;width:72.50px;justify-content:center;top:421.05px;font-size:10.8px;"><span style="transform:scaleX(0.875);transform-origin:center center">28MM</span></div>
<div class="t b" style="left:903.50px;width:69.80px;justify-content:flex-end;top:421.05px;"><span style="transform:scaleX(0.79);transform-origin:right center">0 KG</span></div>
<div class="t n" style="left:831.00px;width:72.50px;justify-content:center;top:440.55px;font-size:10.8px;"><span style="transform:scaleX(0.875);transform-origin:center center">32MM</span></div>
<div class="t b" style="left:903.50px;width:69.80px;justify-content:flex-end;top:440.55px;"><span style="transform:scaleX(0.79);transform-origin:right center">0 KG</span></div>
<div class="t n" style="left:831.00px;width:72.50px;justify-content:center;top:460.05px;font-size:10.8px;"><span style="transform:scaleX(0.875);transform-origin:center center">40MM</span></div>
<div class="t b" style="left:903.50px;width:69.80px;justify-content:flex-end;top:460.05px;"><span style="transform:scaleX(0.79);transform-origin:right center">0 KG</span></div>
</div>

<!-- ===== scrollbars / sheet tabs / status ===== -->
<div id="bottom">
<!-- vertical scrollbar -->
<div class="abs" style="left:1008px;top:86px;width:16px;height:448px;background:#f5f5f5"></div>
<svg class="abs" style="left:1013px;top:92.500px" width="8" height="6" viewBox="0 0 8 6"><path d="M4 .8L7.400 5.200H.6z" fill="#666"/></svg>
<div class="abs" style="left:1013.600px;top:116.600px;width:6.400px;height:22.400px;border-radius:3.200px;background:#737373"></div>
<svg class="abs" style="left:1013px;top:527.200px" width="8" height="6" viewBox="0 0 8 6"><path d="M4 5.200L7.400.8H.6z" fill="#666"/></svg>
<!-- tab strip -->
<div class="abs" style="left:0;top:534px;width:1024px;height:22px;background:#efefef"></div>
<svg class="abs" style="left:20.500px;top:542.400px" width="6" height="8" viewBox="0 0 6 8"><path d="M4.800 0.800L1.400 4 4.800 7.200" fill="none" stroke="#c2c2c2" stroke-width="1.200"/></svg>
<svg class="abs" style="left:45.500px;top:542.400px" width="6" height="8" viewBox="0 0 6 8"><path d="M1.200 0.800L4.600 4 1.200 7.200" fill="none" stroke="#c2c2c2" stroke-width="1.200"/></svg>
<div class="abs" style="left:87.400px;top:534.400px;width:76.600px;height:19.800px;background:#fbfbfb;border-radius:0 0 3.500px 3.500px"></div>
<div class="ui" style="left:92.800px;top:537.600px;font-weight:bold;font-size:10.6px;color:#2b2b2b"><span style="transform:scaleX(0.925);transform-origin:left center">Stair Estimate</span></div>
<div class="abs" style="left:93px;top:552px;width:65px;height:1.500px;background:#1e8a57"></div>
<div class="abs" style="left:166.500px;top:538px;width:1px;height:15px;background:#dcdcdc"></div>
<div class="ui" style="left:177.600px;top:539px;font-size:10.600px;color:#444"><span style="transform:scaleX(0.97);transform-origin:left center">Dashboard</span></div>
<div class="abs" style="left:238.500px;top:538px;width:1px;height:15px;background:#dcdcdc"></div>
<svg class="abs" style="left:269px;top:541px" width="10" height="10" viewBox="0 0 10 10"><path d="M5 1v8M1 5h8" stroke="#555" stroke-width="1"/></svg>
<!-- horizontal scrollbar -->
<div class="abs" style="left:720.400px;top:543px;width:1.400px;height:1.400px;background:#555;box-shadow:0 3px 0 #555,0 6px 0 #555"></div>
<svg class="abs" style="left:736.500px;top:541.500px" width="6" height="8" viewBox="0 0 6 8"><path d="M.8 4L5.200.6v6.800z" fill="#666"/></svg>
<div class="abs" style="left:746px;top:542.600px;width:20.500px;height:6.400px;border-radius:3.200px;background:#737373"></div>
<svg class="abs" style="left:1001px;top:541.500px" width="6" height="8" viewBox="0 0 6 8"><path d="M5.200 4L.8.600v6.800z" fill="#666"/></svg>
<!-- status bar -->
<div class="abs" style="left:0;top:556px;width:1024px;height:19px;background:#f3f3f3;border-top:1px solid #f7f7f7;box-sizing:border-box"></div>
<div class="ui" style="left:8.700px;top:560.700px;font-size:9.600px;color:#3a3a3a"><span style="transform:scaleX(0.83);transform-origin:left center">Ready</span></div>
<svg class="abs" style="left:46px;top:562.200px" width="11" height="9.600" viewBox="0 0 12 11"><rect x="0.600" y="0.600" width="10.800" height="9.800" rx="1" fill="none" stroke="#555" stroke-width="1"/><path d="M.6 3.400h10.800M3.400 3.400v7" stroke="#555" stroke-width="0.900"/><circle cx="7.400" cy="7" r="1.900" fill="none" stroke="#555" stroke-width="0.900"/><circle cx="7.400" cy="7" r=".7" fill="#555"/></svg>
<svg class="abs" style="left:70.400px;top:560.500px" width="12.600" height="12.600" viewBox="0 0 14 14"><circle cx="6" cy="2.200" r="1.400" fill="none" stroke="#555" stroke-width="0.900"/><path d="M1.400 4.600c3 1 6.200 1 9.200 0M6 5.400v3M6 8.400l-2.800 4.400M6 8.400l1.600 2.400" fill="none" stroke="#555" stroke-width="0.900" stroke-linecap="round"/><path d="M9 9.400l3.600 3.600M12.600 9.400L9 13" stroke="#555" stroke-width="0.900"/></svg>
<div class="ui" style="left:83.700px;top:560.600px;font-weight:bold;font-size:9.300px;color:#333"><span style="transform:scaleX(0.846);transform-origin:left center">Accessibility: Investigate</span></div>
<!-- view buttons -->
<div class="abs" style="left:800.700px;top:559.800px;width:28.600px;height:15.200px;background:#e0e0e0"></div>
<svg class="abs" style="left:808.800px;top:561px" width="10.400" height="10" viewBox="0 0 11 11" preserveAspectRatio="none"><path d="M.6.600h9.800v9.800H.6zM.6 3.900h9.800M.6 7.100h9.800M3.900.6v9.800M7.100.6v9.800" fill="none" stroke="#4a4a4a" stroke-width="0.900"/></svg>
<svg class="abs" style="left:839.200px;top:561px" width="10.800" height="10" viewBox="0 0 11 11" preserveAspectRatio="none"><rect x=".6" y=".6" width="9.800" height="9.800" fill="none" stroke="#555" stroke-width="0.900"/><rect x="3" y="3" width="5" height="5" fill="none" stroke="#555" stroke-width="0.900"/><path d="M4.200 5.500h2.600" stroke="#555" stroke-width="0.800"/></svg>
<svg class="abs" style="left:869px;top:561px" width="10.800" height="10" viewBox="0 0 11 11" preserveAspectRatio="none"><rect x=".6" y=".6" width="9.800" height="9.800" fill="none" stroke="#555" stroke-width="0.900"/><path d="M3.400.6v5.600M7 .6v5.600M.6 6.200H7" fill="none" stroke="#555" stroke-width="0.900"/></svg>
<div class="abs" style="left:894.500px;top:566.500px;width:5px;height:1px;background:#555"></div>
<div class="abs" style="left:904px;top:566.600px;width:75px;height:1px;background:#a6a6a6"></div>
<div class="abs" style="left:940px;top:562.700px;width:3.800px;height:8px;border-radius:1px;background:#6a6a6a"></div>
<div class="abs" style="left:982.700px;top:566.400px;width:6px;height:0.900px;background:#555"></div>
<div class="abs" style="left:985.250px;top:563.800px;width:0.900px;height:6px;background:#555"></div>
<div class="ui" style="left:999.300px;top:560px;font-size:9.400px;color:#444"><span style="transform:scaleX(0.79);transform-origin:left center">100%</span></div>

</div>

</div>
</body>
</html>
